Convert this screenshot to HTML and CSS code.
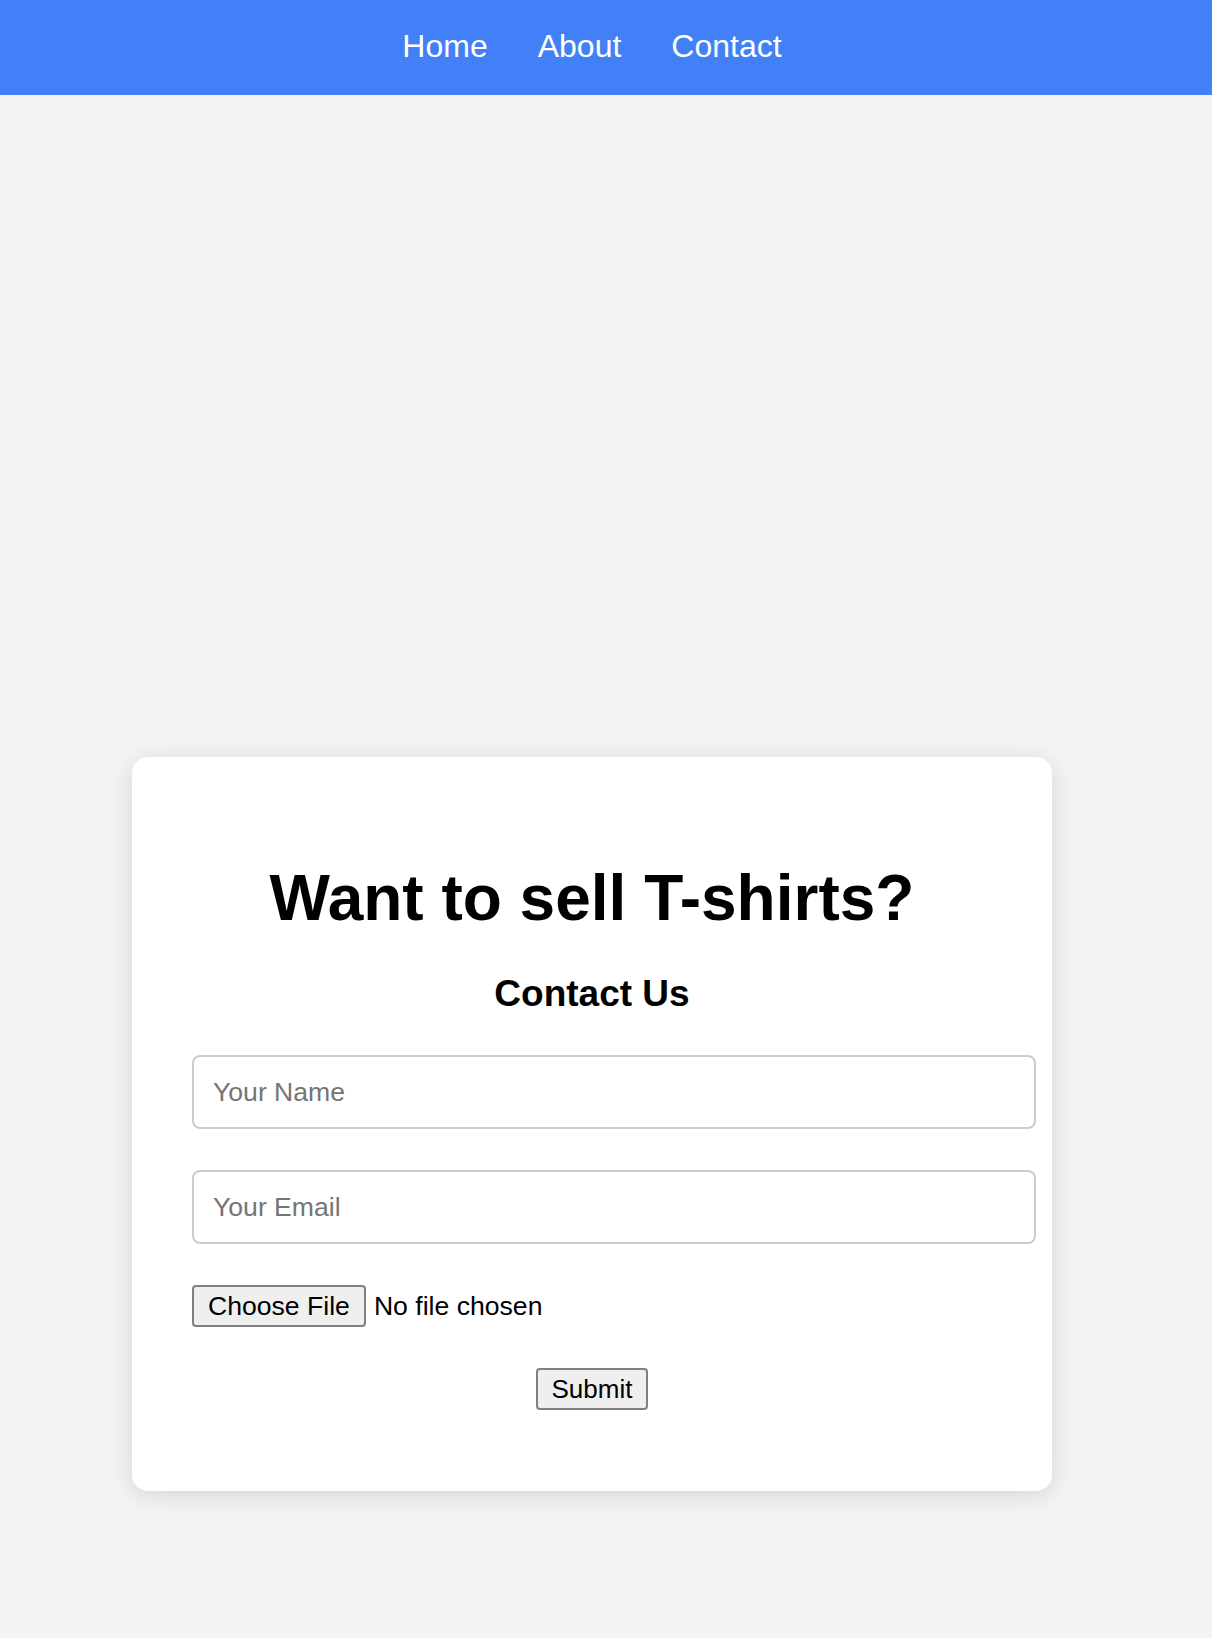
FILE: index.html
```html
<!DOCTYPE html>
<html lang="en">
<head>
<meta charset="utf-8">
<title>Want to sell T-shirts?</title>
<link rel="stylesheet" href="styles.css">
</head>
<body>
<nav class="topnav">
  <a class="topnav-link" href="#">Home</a>
  <a class="topnav-link" href="#">About</a>
  <a class="topnav-link" href="#">Contact</a>
</nav>
<main class="page">
  <div class="hero"></div>
  <section class="card">
    <h1 class="card-title">Want to sell T-shirts?</h1>
    <h2 class="card-subtitle">Contact Us</h2>
    <form class="contact-form">
      <input class="text-field" type="text" placeholder="Your Name">
      <input class="text-field" type="email" placeholder="Your Email">
      <input class="file-field" type="file">
      <button class="submit-btn" type="submit">Submit</button>
    </form>
  </section>
</main>
</body>
</html>
```

FILE: styles.css
```css
html, body {
  margin: 0;
  padding: 0;
}

body {
  background: #f3f3f3;
  font-family: "Liberation Sans", Arial, Helvetica, sans-serif;
  color: #000;
}

.topnav {
  display: flex;
  justify-content: center;
  gap: 50px;
  background: #4280f7;
  padding: 28px 28px 30px 0;
  height: 37px;
}

.topnav-link {
  color: #fff;
  text-decoration: none;
  font-size: 32px;
  line-height: 37px;
}

.page {
  padding-right: 28px;
  padding-bottom: 147px;
}

.hero {
  height: 662px;
}

.card {
  width: 800px;
  margin: 0 auto;
  padding: 60px 60px 81px;
  background: #fff;
  border-radius: 16px;
  box-shadow: 0 4px 24px rgba(0, 0, 0, 0.12);
}

.card-title {
  margin: 44px 0 38px;
  font-size: 64px;
  line-height: 74px;
  font-weight: bold;
  text-align: center;
}

.card-subtitle {
  margin: 0 0 41px;
  font-size: 37px;
  line-height: 41px;
  font-weight: bold;
  text-align: center;
}

.contact-form {
  display: flex;
  flex-direction: column;
  align-items: flex-start;
  gap: 41px;
}

.text-field {
  box-sizing: content-box;
  width: 100%;
  height: 30px;
  margin: 0;
  padding: 20px 21px 20px 19px;
  border: 2px solid #cccccc;
  border-radius: 8px;
  background: #fff;
  font-family: "Liberation Sans", Arial, sans-serif;
  font-size: 26.6px;
  line-height: 30px;
  color: #000;
  outline: none;
}

.text-field::placeholder {
  color: #757575;
}

.file-field {
  margin: 0;
  padding: 0;
  height: 42px;
  font-family: "Liberation Sans", Arial, sans-serif;
  font-size: 26.6px;
  line-height: 42px;
  color: #000;
}

.file-field::file-selector-button {
  box-sizing: border-box;
  height: 42px;
  font-family: "Liberation Sans", Arial, sans-serif;
  font-size: 26.6px;
  line-height: 30px;
  color: #000;
  background: #efefef;
  border: 2px solid #808080;
  border-radius: 4px;
  padding: 4px 14px;
  margin: 0 8px 0 0;
}

.submit-btn {
  align-self: center;
  box-sizing: border-box;
  height: 42px;
  margin: 0;
  font-family: "Liberation Sans", Arial, sans-serif;
  font-size: 26px;
  line-height: 30px;
  color: #000;
  background: #efefef;
  border: 2px solid #808080;
  border-radius: 4px;
  padding: 4px 14px;
}
```
